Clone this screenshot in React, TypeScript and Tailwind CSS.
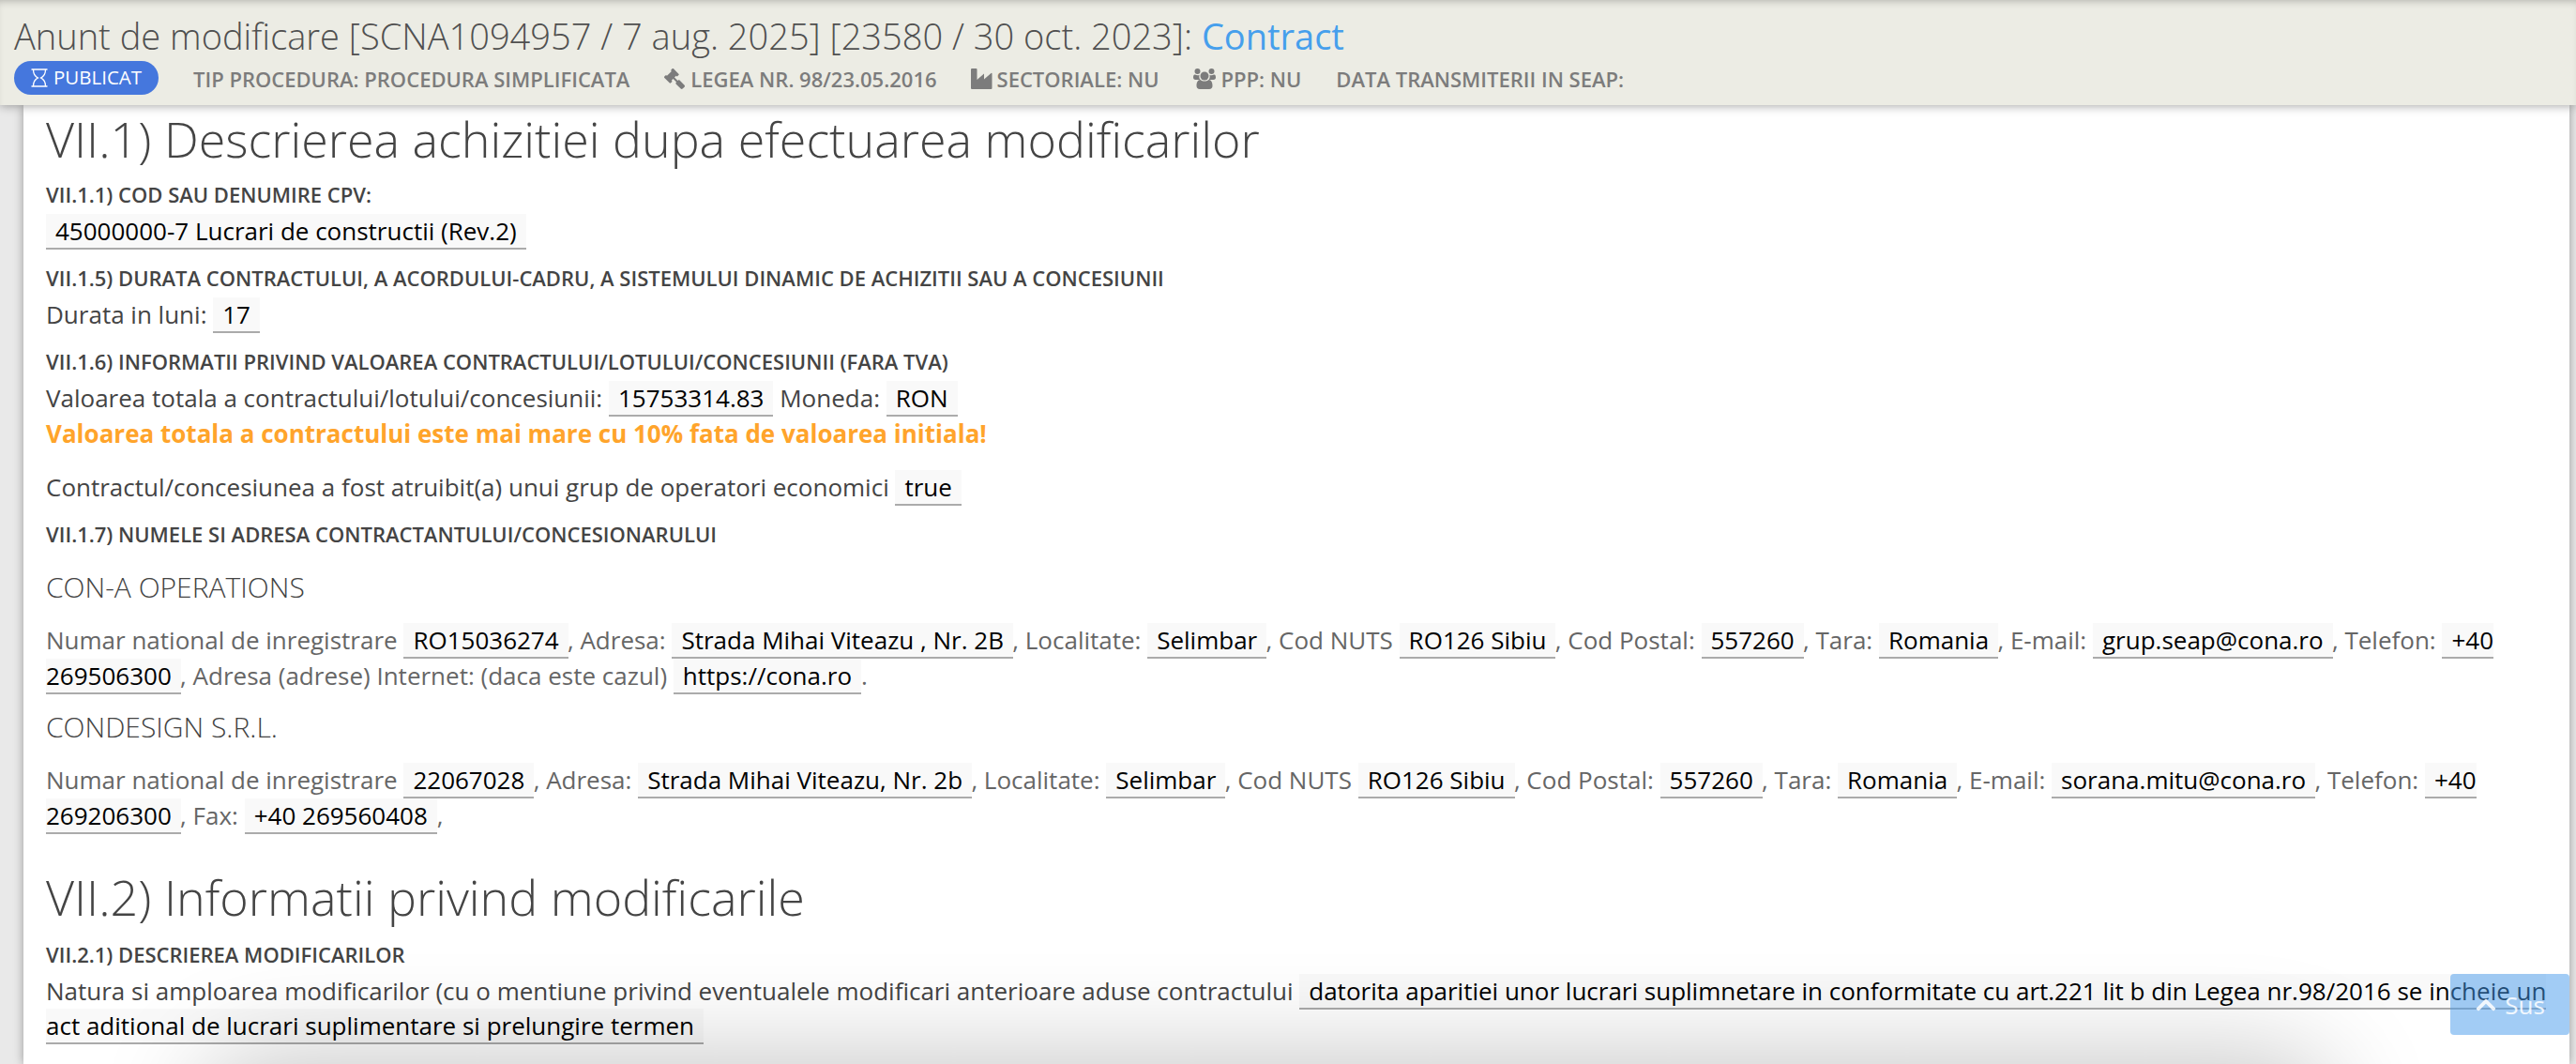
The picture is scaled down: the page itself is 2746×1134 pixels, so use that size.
import type { ReactNode } from "react"
import { FaGavel, FaChevronUp } from "react-icons/fa"

function Field({ children }: { children: ReactNode }) {
  return <span className="border-b-2 border-[#ababab] bg-[#f9f9f9] px-[10px] text-black">{children}</span>
}

function Heading({ children, className }: { children: ReactNode; className: string }) {
  return <h6 className={`text-[22px] leading-[30px] font-semibold uppercase ${className}`}>{children}</h6>
}

function HourglassIcon() {
  return (
    <svg width="18" height="20" viewBox="0 0 18 20" fill="none" stroke="currentColor" strokeWidth="1.3">
      <path d="M0.500 1h17M0.500 19h17M2.500 1c0 5 1.500 6.500 4.500 9-3 2.500-4.500 4-4.500 9M15.500 1c0 5-1.500 6.500-4.500 9 3 2.500 4.500 4 4.500 9M7 10h1.200M9.800 10H11" />
    </svg>
  )
}

function IndustryIcon() {
  return (
    <svg width="23" height="22" viewBox="0 0 23 22" fill="currentColor">
      <path d="M1 0h4.500q1 0 1 1v11L14 5.500v6L21.500 5q1-.5 1 .5V21q0 1-1 1H1q-1 0-1-1V1q0-1 1-1z" />
    </svg>
  )
}

function UsersIcon() {
  return (
    <svg width="24" height="22" viewBox="0 0 24 22" fill="currentColor">
      <circle cx="4.500" cy="3" r="3" />
      <circle cx="19.500" cy="3" r="3" />
      <path d="M2 6.500c1.500 1 3.500 1 4.500.2C6 9 6.500 11 7.500 12H2.500C.8 12 0 11 0 9.500 0 8 .5 6 2 6.500zM22 6.500c-1.500 1-3.500 1-4.500.2.5 2.300 0 4.300-1 5.300h5c1.700 0 2.500-1 2.500-2.500 0-1.500-.5-3.500-2-3z" />
      <circle cx="12" cy="8" r="4.500" />
      <path d="M7.500 12c2.700 2 6.300 2 9 0 2.800 0 4 3 4 6.500 0 2.300-1.300 3.500-3.500 3.500H7c-2.200 0-3.500-1.200-3.500-3.500 0-3.500 1.200-6.500 4-6.500z" />
    </svg>
  )
}

type Contractor = { name: string; fields: [string, string][]; end: string }

const contractors: Contractor[] = [
  {
    name: "CON-A OPERATIONS",
    fields: [
      ["Numar national de inregistrare", "RO15036274"],
      [", Adresa:", "Strada Mihai Viteazu , Nr. 2B"],
      [", Localitate:", "Selimbar"],
      [", Cod NUTS", "RO126 Sibiu"],
      [", Cod Postal:", "557260"],
      [", Tara:", "Romania"],
      [", E-mail:", "grup.seap@cona.ro"],
      [", Telefon:", "+40 269506300"],
      [", Adresa (adrese) Internet: (daca este cazul)", "https://cona.ro"],
    ],
    end: ".",
  },
  {
    name: "CONDESIGN S.R.L.",
    fields: [
      ["Numar national de inregistrare", "22067028"],
      [", Adresa:", "Strada Mihai Viteazu, Nr. 2b"],
      [", Localitate:", "Selimbar"],
      [", Cod NUTS", "RO126 Sibiu"],
      [", Cod Postal:", "557260"],
      [", Tara:", "Romania"],
      [", E-mail:", "sorana.mitu@cona.ro"],
      [", Telefon:", "+40 269206300"],
      [", Fax:", "+40 269560408"],
    ],
    end: ",",
  },
]

export default function App() {
  return (
    <div className="relative flex h-[1134px] w-[2746px] flex-col overflow-hidden bg-[#e9e9e9] font-['Open_Sans',sans-serif] text-[26px] leading-[38px] text-[#444]">
      {/* Header */}
      <header className="z-10 h-[112px] shrink-0 bg-[#ecece4] px-[15px] pt-[11px] shadow-[0_1px_10px_rgba(0,0,0,0.35),inset_0_6px_8px_-5px_rgba(0,0,0,0.25)]">
        <h1 className="text-[38px] leading-[54px] font-light text-[#505050]">
          Anunt de modificare [SCNA1094957 / 7 aug. 2025] [23580 / 30 oct. 2023]:{" "}
          <span className="font-normal text-[#469fec]">Contract</span>
        </h1>
        <div className="flex items-start text-[22px] leading-[38px] font-semibold text-[#7c7c7c]">
          <span className="flex h-9 w-[154px] items-center justify-center gap-[6px] rounded-full bg-[#4577dd] text-[20.5px] leading-[34px] font-normal text-white">
            <HourglassIcon />
            <span className="-mt-0.5">PUBLICAT</span>
          </span>
          <span className="ml-[37px]">TIP PROCEDURA: PROCEDURA SIMPLIFICATA</span>
          <span className="ml-[37px] flex items-center gap-[6px]">
            <FaGavel size={22} className="-scale-x-100" /> LEGEA NR. 98/23.05.2016
          </span>
          <span className="ml-9 flex items-center gap-[5px]">
            <IndustryIcon /> SECTORIALE: NU
          </span>
          <span className="ml-[37px] flex items-center gap-[5px]">
            <UsersIcon /> PPP: NU
          </span>
          <span className="ml-[37px]">DATA TRANSMITERII IN SEAP:</span>
        </div>
      </header>

      {/* Content */}
      <main className="mr-[7px] ml-[25px] h-[1100px] bg-white pr-[22px] pl-6 shadow-[0_0_10px_rgba(0,0,0,0.35)]">
        <h2 className="text-[52px] leading-[72px] font-light">VII.1) Descrierea achizitiei dupa efectuarea modificarilor</h2>
        <Heading className="mt-2">VII.1.1) Cod sau denumire CPV:</Heading>
        <p className="mt-[5px]">
          <Field>45000000-7 Lucrari de constructii (Rev.2)</Field>
        </p>
        <Heading className="mt-4">
          VII.1.5) Durata contractului, a acordului-cadru, a sistemului dinamic de achizitii sau a concesiunii
        </Heading>
        <p className="mt-[5px]">
          Durata in luni: <Field>17</Field>
        </p>
        <Heading className="mt-4">VII.1.6) Informatii privind valoarea contractului/lotului/concesiunii (fara TVA)</Heading>
        <p className="mt-[5px]">
          Valoarea totala a contractului/lotului/concesiunii: <Field>15753314.83</Field> Moneda: <Field>RON</Field>
        </p>
        <p className="font-bold text-[#ffa42b]">Valoarea totala a contractului este mai mare cu 10% fata de valoarea initiala!</p>
        <p className="mt-[19px]">
          Contractul/concesiunea a fost atruibit(a) unui grup de operatori economici <Field>true</Field>
        </p>
        <Heading className="mt-4 mb-[21px]">VII.1.7) Numele si adresa contractantului/concesionarului</Heading>

        {contractors.map((c) => (
          <section key={c.name} className="mb-[15px]">
            <h5 className="text-[30px] leading-[42px] font-light">{c.name}</h5>
            <p className="mt-4 text-[#666]">
              {c.fields.map(([label, value]) => (
                <span key={label} className="not-first:-ml-[0.7px]">
                  {label} <Field>{value}</Field>
                </span>
              ))}
              {c.end}
            </p>
          </section>
        ))}

        <h2 className="mt-8 text-[52px] leading-[72px] font-light">VII.2) Informatii privind modificarile</h2>
        <Heading className="mt-[10px]">VII.2.1) Descrierea modificarilor</Heading>
        <p className="mt-[6px] leading-[37px]">
          Natura si amploarea modificarilor (cu o mentiune privind eventualele modificari anterioare aduse contractului{" "}
          <Field>
            datorita aparitiei unor lucrari suplimnetare in conformitate cu art.221 lit b din Legea nr.98/2016 se incheie un act
            aditional de lucrari suplimentare si prelungire termen
          </Field>
        </p>
      </main>

      {/* Back to top */}
      <button className="absolute top-[1038px] left-[2612px] flex h-[65px] w-[127px] items-center justify-center gap-2 rounded bg-[#459aec]/50 text-[26px] text-white/85">
        <FaChevronUp size={24} /> Sus
      </button>
      <div className="absolute top-[1154px] left-[240px] h-20 w-[2220px] rounded-full shadow-[0_0_110px_30px_rgba(0,0,0,0.22)]" />
    </div>
  )
}
